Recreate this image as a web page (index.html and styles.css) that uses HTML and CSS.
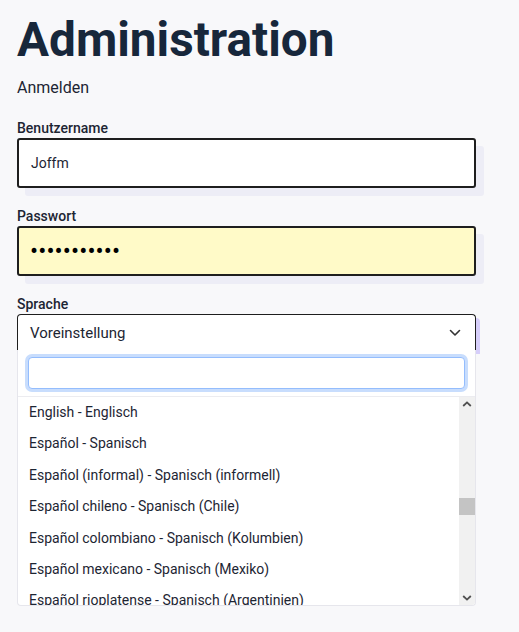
FILE: index.html
```html
<!DOCTYPE html>
<html lang="de">
<head>
<meta charset="utf-8">
<title>Administration</title>
<link rel="stylesheet" href="styles.css">
</head>
<body>
<main class="login">
  <h1 class="title">Administration</h1>
  <p class="subtitle">Anmelden</p>
  <form class="form">
    <div class="field">
      <label class="field-label" for="user">Benutzername</label>
      <input id="user" class="text-input" type="text" value="Joffm">
    </div>
    <div class="field">
      <label class="field-label" for="pass">Passwort</label>
      <input id="pass" class="text-input text-input--autofill" type="password" value="geheimwort1">
    </div>
    <div class="field">
      <label class="field-label" for="lang">Sprache</label>
      <div class="select">
        <button id="lang" class="select-toggle" type="button">
          <span>Voreinstellung</span>
          <svg class="select-chevron" width="12" height="8" viewBox="0 0 12 8" aria-hidden="true"><path d="M1.5 1.5 6 6l4.5-4.5" fill="none" stroke="#333" stroke-width="1.6" stroke-linecap="round" stroke-linejoin="round"/></svg>
        </button>
        <div class="select-menu">
          <div class="select-search"><input class="search-input" type="text" aria-label="Suchen"></div>
          <div class="select-body">
            <ul class="option-list">
              <li class="option">English - Englisch</li>
              <li class="option">Español - Spanisch</li>
              <li class="option">Español (informal) - Spanisch (informell)</li>
              <li class="option">Español chileno - Spanisch (Chile)</li>
              <li class="option">Español colombiano - Spanisch (Kolumbien)</li>
              <li class="option">Español mexicano - Spanisch (Mexiko)</li>
              <li class="option">Español rioplatense - Spanisch (Argentinien)</li>
            </ul>
            <div class="scrollbar" aria-hidden="true">
              <div class="scrollbar-button">
                <svg width="10" height="6" viewBox="0 0 10 6"><path d="M1.2 5 5 1.4 8.8 5" fill="none" stroke="#505050" stroke-width="1.8"/></svg>
              </div>
              <div class="scrollbar-track"><div class="scrollbar-thumb"></div></div>
              <div class="scrollbar-button">
                <svg width="10" height="6" viewBox="0 0 10 6"><path d="M1.2 1 5 4.6 8.8 1" fill="none" stroke="#505050" stroke-width="1.8"/></svg>
              </div>
            </div>
          </div>
        </div>
      </div>
    </div>
  </form>
</main>
</body>
</html>
```
FILE: styles.css
```css
html, body {
  margin: 0;
  padding: 0;
}

body {
  background: #f8f8fa;
  font-family: Roboto, "Noto Sans", sans-serif;
  color: #1d2533;
}

.login {
  width: 459px;
  padding: 12px 17px 0;
}

.title {
  margin: 0;
  font-size: 47.7px;
  line-height: 56px;
  font-weight: 700;
  color: #17273b;
}

.subtitle {
  margin: 8px 0 0;
  font-size: 16px;
  line-height: 24px;
}

.form {
  margin: 0;
}

.field {
  margin-top: 18px;
}

.field-label {
  display: block;
  font-size: 14px;
  line-height: 20px;
  font-weight: 500;
  color: #1d2533;
}

.text-input {
  display: block;
  box-sizing: border-box;
  width: 459px;
  height: 50px;
  margin: 0;
  padding: 0 12px;
  border: 2px solid #1e1e1e;
  border-radius: 3px;
  background: #fff;
  box-shadow: 8px 8px 0 #ededf6;
  font-family: Roboto, "Noto Sans", sans-serif;
  font-size: 14px;
  color: #1d2533;
  outline: none;
}

.text-input--autofill {
  background: #fffac8;
  font-size: 24px;
  letter-spacing: 0.1px;
  padding-left: 11px;
  color: #000;
}

/* the open dropdown: toggle on top, menu directly below it */
.select {
  display: flex;
  flex-direction: column;
  width: 459px;
}

.select-toggle {
  display: flex;
  align-items: center;
  justify-content: space-between;
  box-sizing: border-box;
  width: 459px;
  height: 36px;
  margin: 0;
  padding: 0 14px 0 12px;
  border: 1px solid #1e1e1e;
  border-bottom: 0;
  border-radius: 4px 4px 0 0;
  background: #fff;
  box-shadow: 4px 4px 0 #d6cefa;
  font-family: Roboto, "Noto Sans", sans-serif;
  font-size: 15px;
  color: #1d2533;
  text-align: left;
}

.select-chevron {
  display: block;
}

.select-menu {
  position: relative;
  box-sizing: border-box;
  width: 459px;
  background: #fff;
  border: 1px solid #e6e6ec;
  border-top: 0;
  border-radius: 0 0 4px 4px;
  overflow: hidden;
}

.select-search {
  padding: 7px 10px 7px;
  border-bottom: 1px solid #ececf0;
}

.search-input {
  display: block;
  box-sizing: border-box;
  width: 100%;
  height: 32px;
  margin: 0;
  border: 1px solid #94bdfd;
  border-radius: 4px;
  box-shadow: 0 0 0 3px #c8ddfd;
  background: #fff;
  outline: none;
}

.select-body {
  display: grid;
  grid-template-columns: 1fr 16px;
  height: 208px;
}

.option-list {
  list-style: none;
  margin: 0;
  padding: 0;
  overflow: hidden;
}

.option {
  padding: 5px 11px 6.4px;
  font-size: 14px;
  line-height: 20px;
  color: #1d2533;
  white-space: nowrap;
}

.scrollbar {
  display: flex;
  flex-direction: column;
  background: #f1f1f1;
}

.scrollbar-button {
  display: flex;
  align-items: center;
  justify-content: center;
  height: 14px;
}

.scrollbar-button svg {
  display: block;
}

.scrollbar-track {
  flex: 1;
}

.scrollbar-thumb {
  height: 17px;
  margin-top: 87px;
  background: #c4c4c4;
}
```
